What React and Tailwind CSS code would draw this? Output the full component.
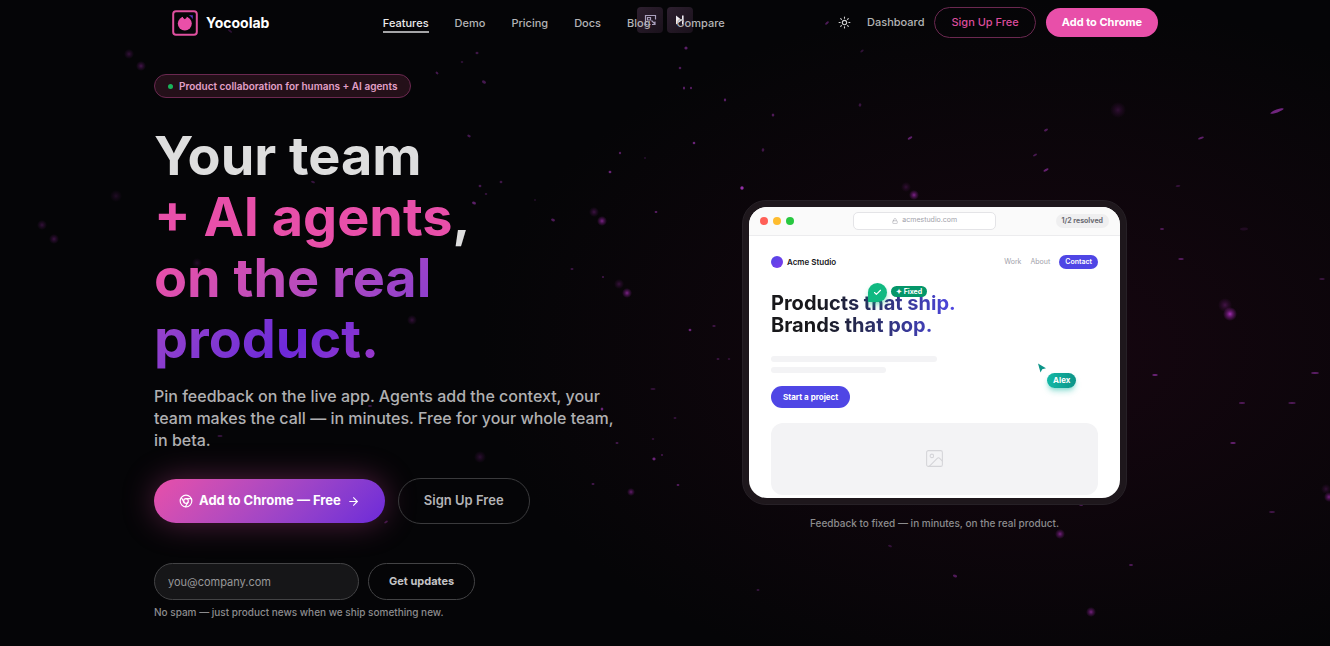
import React, { useState } from 'react';
import { ArrowRight, Check, Chromium, Image, Lock, Sun } from 'lucide-react';

const navLinks = ['Features', 'Demo', 'Pricing', 'Docs', 'Blog', 'Compare'];

// x, y, half width, half height, angle, opacity
const specks = [
  [686, 48, 1.6, 1.6, 0, 0.6], [680, 68, 1.3, 1.3, 0, 0.5], [684, 88, 1.1, 1.6, 0, 0.6],
  [691, 88, 1.1, 1.3, 0, 0.55], [725, 100, 1.2, 1.4, 0, 0.6], [694, 143, 1.3, 1.3, 0, 0.7],
  [620, 153, 1.2, 1.2, 0, 0.55], [645, 158, 1, 1, 0, 0.25], [610, 172, 1.4, 1.3, 0, 0.7],
  [742, 188, 1.7, 1.7, 0, 1], [656, 212, 1.4, 1, 0, 0.6], [553, 220, 2, 1.3, 20, 0.5],
  [535, 200, 1.2, 1, 0, 0.2], [474, 203, 2, 1.4, 20, 0.6], [480, 186, 1.4, 1.2, 0, 0.45],
  [501, 182, 1.4, 1.2, 0, 0.4], [486, 194, 1.3, 1, 0, 0.35], [469, 136, 1.8, 1.2, 25, 0.45],
  [484, 82, 2.2, 1.4, 30, 0.45], [477, 53, 1.5, 1.3, 0, 0.4], [462, 62, 1.3, 1, 0, 0.3],
  [572, 269, 1.5, 1, 0, 0.4], [603, 277, 1.2, 1, 0, 0.4], [690, 330, 1.4, 1.3, 0, 0.7],
  [714, 326, 1.7, 1, 0, 0.4], [718, 359, 1.5, 0.8, 0, 0.5], [729, 359, 1.3, 0.8, 0, 0.4],
  [653, 389, 2.6, 0.9, 0, 0.3], [602, 409, 1.3, 1.5, 0, 0.7], [675, 418, 1.5, 0.8, 0, 0.45],
  [617, 443, 1.5, 0.9, 0, 0.45], [653, 439, 1.3, 0.9, 0, 0.3], [654, 459, 1.6, 1.4, 0, 0.7],
  [662, 455, 1.2, 1, 0, 0.4], [593, 484, 1.5, 1, 0, 0.45], [678, 485, 1.4, 1.1, 0, 0.55],
  [1277, 111, 7, 1.5, -20, 0.75], [1201, 138, 3, 1.1, -18, 0.6], [1178, 186, 2.4, 1, -5, 0.3],
  [1162, 229, 2, 0.9, 0, 0.5], [1244, 229, 4, 1.4, -5, 0.15], [1181, 259, 2.8, 1, 0, 0.55],
  [1322, 279, 2.8, 1, 0, 0.35], [1155, 375, 2.8, 0.9, 0, 0.7], [1315, 373, 3.8, 0.9, 0, 0.6],
  [1242, 403, 3.2, 0.9, 0, 0.5], [1292, 403, 3.6, 0.9, 0, 0.5], [1233, 443, 2.8, 1, 0, 0.65],
  [1272, 512, 3, 1, 0, 0.4], [1131, 565, 2, 1, 0, 0.5], [910, 138, 2.6, 1.1, -30, 0.6],
  [1046, 130, 2.2, 1.1, -30, 0.5], [1035, 155, 2.2, 1, -30, 0.45], [1046, 170, 2.8, 1.1, -25, 0.65],
  [827, 23, 2.2, 1.1, -40, 0.5], [773, 115, 1.3, 1.6, 0, 0.5], [860, 105, 1.3, 1.7, 20, 0.35],
  [763, 150, 1.3, 1.7, 10, 0.4], [955, 576, 2.2, 1.3, 20, 0.5], [1081, 505, 2, 1, 10, 0.45],
  [313, 182, 2, 1, 20, 0.35], [437, 73, 1.6, 1.1, 40, 0.45], [220, 436, 2.6, 0.9, 0, 0.35],
  [370, 406, 2, 0.9, 0, 0.4], [230, 31, 2.4, 1, 35, 0.3], [862, 51, 2, 1, -40, 0.3],
  [386, 522, 2, 1, -30, 0.4], [890, 546, 2, 1, 20, 0.3], [758, 590, 1.5, 1, 0, 0.35],
];

// x, y, radius, opacity
const glows = [
  [602, 221, 4, 0.75], [594, 212, 4, 0.35], [627, 293, 4, 0.75], [619, 284, 4, 0.3],
  [631, 492, 3, 0.6], [480, 457, 5, 0.25], [1230, 314, 6, 1], [1225, 305, 6, 0.35],
  [1329, 497, 4, 0.7], [1326, 489, 4, 0.25], [914, 195, 4, 0.75], [906, 187, 4, 0.25],
  [1118, 110, 7, 0.25], [1060, 534, 4, 0.7], [1091, 612, 4, 0.7], [412, 320, 4, 0.3],
  [129, 54, 4, 0.3], [141, 66, 4, 0.4], [42, 225, 4, 0.3], [54, 239, 4, 0.35],
  [116, 196, 5, 0.18], [197, 263, 4, 0.2],
];

const Starfield = () => (
  <svg
    aria-hidden="true"
    className="absolute inset-0 h-full w-full"
    viewBox="0 0 1330 646"
    preserveAspectRatio="xMidYMid slice"
  >
    <defs>
      <radialGradient id="glow">
        <stop offset="0" stopColor="#a42fb5" />
        <stop offset="0.5" stopColor="#7a1c85" stopOpacity="0.6" />
        <stop offset="1" stopColor="#7a1c85" stopOpacity="0" />
      </radialGradient>
      <radialGradient id="haze">
        <stop offset="0" stopColor="#160610" />
        <stop offset="1" stopColor="#160610" stopOpacity="0" />
      </radialGradient>
    </defs>
    <ellipse cx="1040" cy="350" rx="560" ry="350" fill="url(#haze)" />
    {glows.map(([x, y, r, o]) => (
      <circle key={`${x}-${y}`} cx={x} cy={y} r={r + 1} fill="url(#glow)" opacity={o} />
    ))}
    {specks.map(([x, y, rx, ry, angle, o]) => (
      <ellipse
        key={`${x}-${y}`}
        cx={x}
        cy={y}
        rx={rx}
        ry={ry}
        fill="#9330a6"
        opacity={o}
        transform={`rotate(${angle} ${x} ${y})`}
      />
    ))}
  </svg>
);

const Logo = () => (
  <svg viewBox="0 0 26 26" className="size-[26px]" fill="none" aria-hidden="true">
    <rect x="1.2" y="1.2" width="23.6" height="23.6" rx="2.8" stroke="#e0509f" strokeWidth="2" />
    <circle cx="12.8" cy="13.6" r="7" fill="#ea4fa8" />
    <path d="M11 5.500h3.600v2.200l-1.800 1.500-1.800-1.500Z" fill="#050507" />
    <path d="M16.800 5.200h4v4.200c-.8-1.900-2.200-3.400-4-4.200Z" fill="#5b34c4" />
  </svg>
);

const Navbar = () => (
  <header className="relative">
    {/* floating capture controls */}
    <div className="absolute left-1/2 top-[7px] flex -translate-x-1/2 gap-1">
      <button
        type="button"
        aria-label="Picture in picture"
        className="flex size-[26px] items-center justify-center rounded-sm bg-linear-to-br from-[#2e2030] to-[#1a111b]"
      >
        <svg viewBox="0 0 14 14" className="size-3.5" fill="none" stroke="#aaa0bd" strokeWidth="1.2">
          <path d="M4.500 11.500h-2v-9h10v4M2.500 5V2.500M5.500 11.500h2" />
          <path d="M4.500 4.500h3v2.500h-3zM8.500 7.500l3.500 3.500M12 8.500V11.500H9" />
        </svg>
      </button>
      <button
        type="button"
        aria-label="Skip"
        className="flex size-[26px] items-center justify-center rounded-sm bg-linear-to-br from-[#2e2030] to-[#1a111b]"
      >
        <svg viewBox="0 0 12 12" className="size-3" fill="#f1edf4">
          <path d="M2 1.500 8 6.200 2 10.500zM8 1.500h1.600v9H8z" />
        </svg>
      </button>
    </div>

    <div className="relative mx-auto flex h-[45px] max-w-[986px] items-center justify-between">
      <a href="#home" className="flex items-center gap-2 text-sm font-bold text-white">
        <Logo />
        Yocoolab
      </a>

      <nav className="flex items-center gap-[26px] pt-0.5 text-[11px] leading-4 font-medium text-[#b4b4b6]">
        {navLinks.map((link) => (
          <a
            key={link}
            href={`#${link.toLowerCase()}`}
            className={
              link === 'Features'
                ? 'border-b-2 border-[#a5a5a7] text-[#ececec]'
                : 'border-b-2 border-transparent'
            }
          >
            {link}
          </a>
        ))}
      </nav>

      <div className="flex items-center gap-2.5 text-[11px] font-medium">
        <button type="button" aria-label="Toggle theme" className="mr-1.5 text-[#d0d0d0]">
          <Sun size={13} strokeWidth={2} />
        </button>
        <a href="#dashboard" className="text-[#b4b4b6]">Dashboard</a>
        <a
          href="#signup"
          className="flex h-[31px] items-center rounded-full border border-[#6b2850] px-4 text-[#dc4c9c]"
        >
          Sign Up Free
        </a>
        <a
          href="#chrome"
          className="flex h-[29px] items-center rounded-full bg-[#e84fa9] px-4 font-bold text-white"
        >
          Add to Chrome
        </a>
      </div>
    </div>
  </header>
);

const BrowserMock = () => (
  <div className="w-full max-w-[385px] rounded-3xl border border-[#262026] bg-[#1e171c] p-1.5">
    <div className="overflow-hidden rounded-[18px] bg-white text-[#18181b]">
      <div className="flex h-[29px] items-center justify-between border-b border-[#ececee] bg-[#fafafa] px-[11px]">
        <div className="flex gap-[5px]">
          <span className="size-2 rounded-full bg-[#ff5f57]" />
          <span className="size-2 rounded-full bg-[#febc2e]" />
          <span className="size-2 rounded-full bg-[#28c840]" />
        </div>
        <div className="flex h-[18px] w-[143px] items-center justify-center gap-1 rounded-[5px] border border-[#e4e4e7] bg-white text-[7px] text-[#a1a1aa]">
          <Lock size={6} />
          acmestudio.com
        </div>
        <span className="rounded-full bg-[#efeff0] px-1.5 text-[7px] leading-[14px] font-bold text-[#6b6b73]">
          1/2 resolved
        </span>
      </div>

      <div className="relative px-[22px] pt-[19px] pb-[3px]">
        <div className="flex items-center justify-between">
          <div className="flex items-center gap-1 text-[8px] font-semibold">
            <span className="size-3 rounded-full bg-linear-to-br from-[#4f46e5] to-[#7c3aed]" />
            Acme Studio
          </div>
          <div className="flex items-center gap-[9px] text-[7px] leading-[14px] text-[#a1a1aa]">
            <span>Work</span>
            <span>About</span>
            <span className="rounded-full bg-[#4f46e5] px-1.5 font-semibold text-white">
              Contact
            </span>
          </div>
        </div>

        <h2 className="mt-[23px] w-fit bg-linear-to-r from-[#18181b] from-25% to-[#4f46e5] bg-clip-text text-[20px] leading-[22px] font-bold text-transparent">
          Products that ship.
          <br />
          Brands that pop.
        </h2>
        <div className="mt-5 h-1.5 w-[166px] rounded-full bg-[#f3f3f5]" />
        <div className="mt-[5px] h-1.5 w-[115px] rounded-full bg-[#f3f3f5]" />
        <button
          type="button"
          className="mt-[13px] h-[22px] rounded-full bg-[#4f46e5] px-3 text-[8px] font-bold text-white"
        >
          Start a project
        </button>
        <div className="mt-[15px] flex h-[72px] items-center justify-center rounded-xl bg-[#f3f3f5] text-[#d4d4d8]">
          <Image size={21} strokeWidth={1.2} />
        </div>

        {/* resolved pin */}
        <div className="absolute left-[119px] top-[47px] flex items-start gap-1">
          <span className="flex size-[19px] items-center justify-center rounded-full rounded-bl-xs bg-[#10b981] text-white shadow-md shadow-[#10b981]/40">
            <Check size={9} strokeWidth={3} />
          </span>
          <span className="mt-[3px] rounded-full bg-[#059669] px-[5px] text-[7px] leading-[11px] font-bold text-white">
            ✦ Fixed
          </span>
        </div>

        {/* teammate cursor */}
        <div className="absolute left-[288px] top-[127px]">
          <svg viewBox="0 0 10 10" className="size-2.5" fill="#0d9488">
            <path d="M1 .5 9 5.200 5.200 6.200 3.500 9.500Z" />
          </svg>
          <span className="ml-2.5 block rounded-full bg-linear-to-r from-[#14b8a6] to-[#0d9488] px-1.5 text-[8px] leading-[15px] font-bold text-white shadow-md shadow-[#14b8a6]/40">
            Alex
          </span>
        </div>
      </div>
    </div>
  </div>
);

const Hero = () => {
  const [email, setEmail] = useState('');

  return (
    <main className="relative mx-auto grid max-w-[1022px] grid-cols-2 items-center gap-14 pt-[29px] pb-6">
      <div>
        <div className="flex h-6 w-fit items-center gap-1.5 rounded-full border border-[#6b2850] bg-[#241019] px-[13px] text-[10px] font-semibold text-[#e3a0c8]">
          <span className="size-[5px] rounded-full bg-[#19b45a]" />
          Product collaboration for humans + AI agents
        </div>

        <h1 className="mt-[27px] text-[54px] leading-[61px] font-bold text-[#dedede]">
          Your team
          <br />
          <span className="text-[#e84fa9]">+ AI agents</span>,
          <br />
          <span className="bg-linear-135 from-[#e84fa9] from-5% via-[#6d28d9] via-80% to-[#a038c8] bg-clip-text text-transparent">
            on the real
            <br />
            product.
          </span>
        </h1>

        <p className="mt-4 max-w-[470px] text-base leading-[22px] font-medium text-[#b0b0b2]">
          Pin feedback on the live app. Agents add the context, your team makes the call — in
          minutes. Free for your whole team, in beta.
        </p>

        <div className="mt-[27px] flex items-center gap-[13px] text-[13px] font-semibold">
          <a
            href="#chrome"
            className="flex h-11 items-center gap-1.5 rounded-full bg-linear-135 from-[#e84fa9] to-[#6d28d9] px-[25px] font-bold text-white shadow-[0_0_32px_rgba(232,79,169,0.35)]"
          >
            <Chromium size={14} />
            Add to Chrome — Free
            <ArrowRight size={13} />
          </a>
          <a
            href="#signup"
            className="flex h-[46px] items-center rounded-full border border-[#3a3a3c] px-[25px] text-[#b4b4b6]"
          >
            Sign Up Free
          </a>
        </div>

        <form className="mt-[39px] flex gap-[9px]" onSubmit={(e) => e.preventDefault()}>
          <input
            type="email"
            aria-label="Email address"
            placeholder="you@company.com"
            value={email}
            onChange={(e) => setEmail(e.target.value)}
            className="h-[37px] w-[205px] rounded-full border border-[#434345] bg-[#161618] px-[13px] text-[11px] text-[#dedede] placeholder:text-[#98989a]"
          />
          <button
            type="submit"
            className="rounded-full border border-[#434345] px-5 text-[11px] font-bold text-[#c4c4c6]"
          >
            Get updates
          </button>
        </form>
        <p className="mt-1 text-[10px] leading-4 font-medium text-[#8c8c8e]">
          No spam — just product news when we ship something new.
        </p>
      </div>

      <div className="flex flex-col items-center gap-2.5 pt-9">
        <BrowserMock />
        <p className="text-[10px] leading-4 font-medium text-[#8c8c8e]">
          Feedback to fixed — in minutes, on the real product.
        </p>
      </div>
    </main>
  );
};

const App = () => {
  return (
    <div className="relative min-h-screen overflow-hidden bg-[#050507] font-['Inter',sans-serif]">
      <Starfield />
      <Navbar />
      <Hero />
    </div>
  );
};

export default App;
